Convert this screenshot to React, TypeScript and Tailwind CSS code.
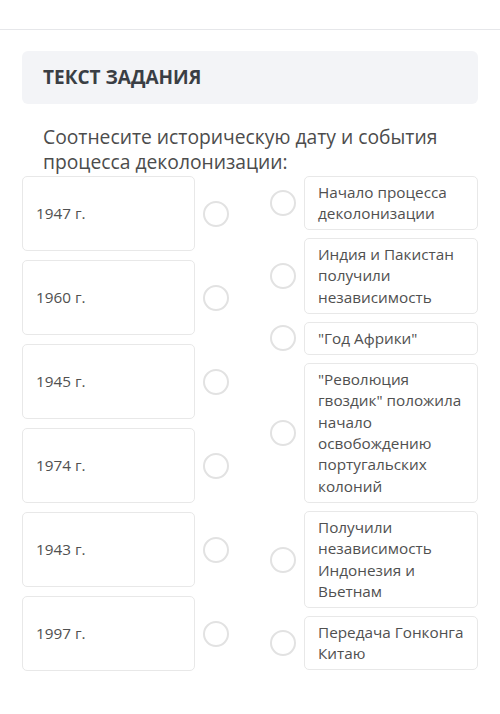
import React from 'react';

const dates = ['1947 г.', '1960 г.', '1945 г.', '1974 г.', '1943 г.', '1997 г.'];

const events = [
  'Начало процесса деколонизации',
  'Индия и Пакистан получили независимость',
  '"Год Африки"',
  '"Революция гвоздик" положила начало освобождению португальских колоний',
  'Получили независимость Индонезия и Вьетнам',
  'Передача Гонконга Китаю',
];

function Radio() {
  return <div className="w-[26px] h-[26px] shrink-0 rounded-full border-2 border-[#e2e2e2] bg-white" />;
}

export default function App() {
  return (
    <div
      className="w-[500px] h-[714px] bg-white text-[#4f4f4f] overflow-hidden"
      style={{ fontFamily: '"Open Sans", "Noto Sans", sans-serif' }}
    >
      {/* top divider */}
      <div className="h-[30px] border-b border-[#e6e7ea]" />

      <div className="px-[22px] pt-[21px]">
        {/* Header */}
        <div className="h-[53px] rounded-[6px] bg-[#f3f4f7] px-[21px] flex items-center">
          <h2 className="text-[19px] font-bold text-[#3a3e44]">ТЕКСТ ЗАДАНИЯ</h2>
        </div>

        <p className="mt-[20px] pl-[21px] text-[19.3px] leading-[25px] text-[#4c4c4c]">
          Соотнесите историческую дату и события процесса деколонизации:
        </p>

        <div className="mt-[2px] flex justify-between">
          {/* Left column */}
          <div className="flex flex-col gap-[9px]">
            {dates.map((d) => (
              <div key={d} className="flex items-center">
                <div className="w-[173px] h-[75px] rounded-[5px] border border-[#e8e8e8] px-[13px] flex items-center text-[15.3px] text-[#505050]">
                  {d}
                </div>
                <div className="ml-[8px]">
                  <Radio />
                </div>
              </div>
            ))}
          </div>

          {/* Right column */}
          <div className="flex flex-col gap-[8.6px]">
            {events.map((e) => (
              <div key={e} className="flex items-center">
                <Radio />
                <div className="ml-[8px] w-[174px] rounded-[5px] border border-[#e8e8e8] pl-[13px] pr-[8px] py-[4.5px] text-[15.3px] leading-[21.4px] text-[#505050]">
                  {e}
                </div>
              </div>
            ))}
          </div>
        </div>
      </div>
    </div>
  );
}
